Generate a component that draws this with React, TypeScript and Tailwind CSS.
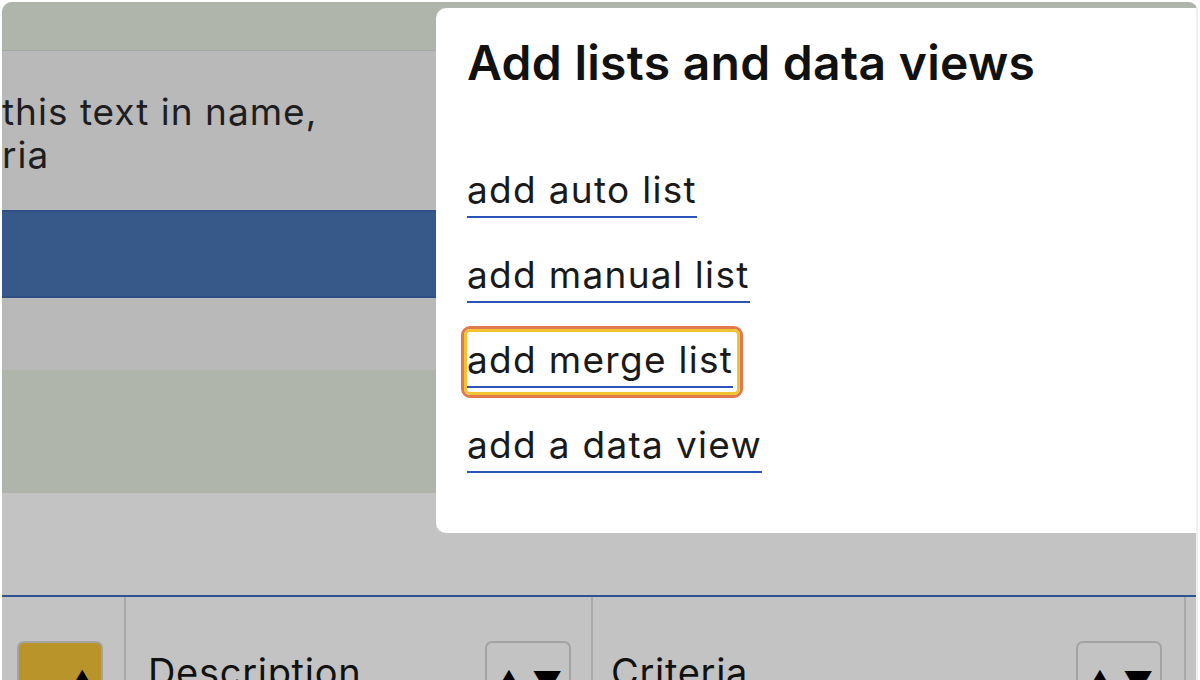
import React from "react";

const font = { fontFamily: "Inter, 'Noto Sans', sans-serif" };

function SortBtn() {
  return (
    <div className="flex h-[46px] w-[86px] shrink-0 items-start justify-center gap-[8px] rounded-[7px] border-2 border-[#a3a3a3] pt-[24px] text-[30px] leading-none text-black">
      <span>▲</span>
      <span>▼</span>
    </div>
  );
}

const links = ["add auto list", "add manual list", "add merge list", "add a data view"];

export default function App() {
  return (
    <div className="h-[680px] w-[1200px] overflow-hidden bg-white px-[2px] pt-[2px]" style={font}>
      <div className="relative flex h-[678px] flex-col overflow-hidden rounded-t-[10px] bg-[#c3c3c3]">
        <div className="h-[49px] shrink-0 border-b border-[#a6a6a6] bg-[#b0b5ac]" />
        <div className="h-[159px] shrink-0 bg-[#b9b9b9] pt-[39px] text-[37px] leading-[43px] tracking-[1px] text-[#1e1e22]">
          <div>this text in name,</div>
          <div>ria</div>
        </div>
        <div className="h-[88px] shrink-0 border-y-2 border-[#2d4f86] bg-[#37598a]" />
        <div className="h-[72px] shrink-0 bg-[#b9b9b9]" />
        <div className="h-[123px] shrink-0 bg-[#b0b5ac]" />
        <div className="h-[102px] shrink-0 bg-[#c3c3c3]" />
        <div className="h-[2px] shrink-0 bg-[#2f5291]" />
        <div className="flex min-h-0 flex-1 bg-[#c3c3c3]">
          <div className="w-[124px] shrink-0 border-r-2 border-[#a9a9a9] pl-[15px] pt-[44px]">
            <div className="h-[46px] w-[86px] rounded-[7px] border-2 border-[#a3a3a3] bg-[#b8942a] pl-[48px] pt-[24px] text-[30px] leading-none text-black">▲</div>
          </div>
          <div className="flex w-[467px] shrink-0 items-start justify-between border-r-2 border-[#a9a9a9] pl-[22px] pr-[20px] pt-[44px]">
            <div className="pt-[12px] text-[38px] leading-none tracking-[0.7px] text-[#111]">Description</div>
            <SortBtn />
          </div>
          <div className="flex w-[593px] shrink-0 items-start justify-between border-r-2 border-[#a9a9a9] pl-[18px] pr-[22px] pt-[44px]">
            <div className="pt-[12px] text-[38px] leading-none tracking-[0.7px] text-[#111]">Criteria</div>
            <SortBtn />
          </div>
          <div className="flex-1" />
        </div>

        <div className="absolute left-[434px] top-[6px] h-[525px] w-[800px] rounded-l-[10px] bg-white pl-[31px] pt-[27px]">
          <h2 className="text-[48px] font-semibold leading-[56px] tracking-[0.3px] text-[#111]">Add lists and data views</h2>
          <div className="mt-[75px] flex flex-col items-start gap-[33px]">
            {links.map((t) =>
              t === "add merge list" ? (
                <div key={t} className="-my-[10px] -ml-[6px] rounded-[9px] border-[3px] border-[#e07a4e]">
                  <div className="rounded-[6px] border-[3px] border-[#f1c232] pb-[4px] pr-[4px] pt-[4px]">
                    <a className="block border-b-2 border-[#2b54b8] pb-[2px] text-[37px] leading-[48px] tracking-[1.3px] text-[#1a1a1a]">{t}</a>
                  </div>
                </div>
              ) : (
                <a key={t} className="block border-b-2 border-[#2b54b8] pb-[2px] text-[37px] leading-[48px] tracking-[1.3px] text-[#1a1a1a]">{t}</a>
              )
            )}
          </div>
        </div>
        <div className="absolute right-0 top-0 h-full w-[2px] bg-[#eeeef3]" />
      </div>
    </div>
  );
}
